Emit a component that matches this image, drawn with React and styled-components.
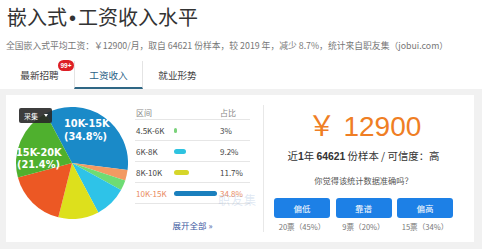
import React from "react";
import styled, { createGlobalStyle } from "styled-components";

const GlobalStyle = createGlobalStyle`
  html, body { margin: 0; padding: 0; background: #fff; }
  body { font-family: "Noto Sans CJK SC", "Noto Sans", sans-serif; color: #333; }
  * { box-sizing: border-box; }
`;

const Page = styled.div`
  width: 482px;
  height: 249px;
  overflow: hidden;
  display: flex;
  flex-direction: column;
`;

const Header = styled.div`
  padding: 3px 7px 0 7px;
`;

const Title = styled.h1`
  margin: 0;
  font-size: 20px;
  line-height: 28px;
  font-weight: 400;
  color: #333;
`;

const Dot = styled.span`
  margin: 0 2px;
  font-family: "Liberation Sans", sans-serif;
`;

const Subtitle = styled.p`
  margin: 8px 0 0 -1px;
  font-size: 8.8px;
  line-height: 12px;
  color: #777;
  white-space: nowrap;
`;

const Tabs = styled.div`
  display: flex;
  margin-top: 9px;
  padding-left: 5px;
  height: 29px;
`;

const Tab = styled.div`
  position: relative;
  width: 69px;
  display: flex;
  align-items: center;
  justify-content: center;
  font-size: 9.6px;
  color: ${(p) => (p.$active ? "#2b5f86" : "#444")};
  border-left: 1px solid ${(p) => (p.$active ? "#e4e4e4" : "transparent")};
  border-right: 1px solid ${(p) => (p.$active ? "#e4e4e4" : "transparent")};
  border-bottom: 2px solid ${(p) => (p.$active ? "#2f6785" : "transparent")};
  padding-top: 2px;
`;

const Badge = styled.span`
  position: absolute;
  left: 52px;
  top: -1px;
  width: 16px;
  height: 11px;
  border-radius: 6px;
  background: #dd1f26;
  color: #fff;
  font-family: "Liberation Sans", sans-serif;
  font-size: 6.5px;
  line-height: 11px;
  text-align: center;
  font-weight: 700;
`;

const Gray = styled.div`
  flex: 1;
  background: #f1f1f1;
  padding: 6px 8px 7px 6px;
`;

const Card = styled.div`
  position: relative;
  background: #fff;
  height: 147px;
  display: flex;
`;

const PieArea = styled.div`
  position: relative;
  padding: 12px 0 0 10px;
  width: 122px;
`;

const Picker = styled.div`
  position: absolute;
  left: 13px;
  top: 13px;
  width: 33px;
  height: 15px;
  background: rgba(40, 40, 40, 0.9);
  border-radius: 2px;
  color: #fff;
  font-size: 7px;
  display: flex;
  align-items: center;
  gap: 6px;
  padding-left: 5px;
`;

const Caret = styled.span`
  width: 0;
  height: 0;
  border-left: 2.5px solid transparent;
  border-right: 2.5px solid transparent;
  border-top: 3px solid #fff;
`;

const TableCol = styled.div`
  width: 115px;
  margin-left: 7px;
  padding-top: 10px;
  display: flex;
  flex-direction: column;
`;

const Row = styled.div`
  display: grid;
  grid-template-columns: 38px 46px 1fr;
  align-items: center;
  height: ${(p) => (p.$head ? "15px" : "21px")};
  border-bottom: 1px solid #e6e6e6;
  font-size: 8px;
  padding-left: 1px;
  padding-top: ${(p) => (p.$head ? "0" : "1px")};
  color: ${(p) => (p.$head ? "#888" : p.$hot ? "#e98a5e" : "#444")};
`;

const Bar = styled.span`
  display: block;
  height: 5px;
  border-radius: 3px;
  background: ${(p) => p.$color};
`;

const Expand = styled.a`
  margin-top: 15px;
  align-self: center;
  font-size: 8.5px;
  line-height: 12px;
  color: #3a58a0;
  text-decoration: none;
`;

const Watermark = styled.span`
  position: absolute;
  left: 212px;
  top: 96px;
  font-size: 12px;
  color: rgba(150, 180, 215, 0.3);
  letter-spacing: 1px;
`;

const Right = styled.div`
  margin: 10px 0 0 13px;
  height: 127px;
  width: 200px;
  border-left: 1px solid #e8e8e8;
  display: flex;
  flex-direction: column;
  align-items: center;
  padding-top: 6px;
`;

const Price = styled.div`
  font-family: "Liberation Sans", "Noto Sans CJK SC", sans-serif;
  font-size: 28px;
  line-height: 32px;
  color: #ef7e24;
  margin-left: 2px;
`;

const Info = styled.div`
  margin-top: 6px;
  font-size: 10.4px;
  line-height: 14px;
  color: #333;
  b { font-weight: 700; font-family: "Liberation Sans", sans-serif; }
`;

const Question = styled.div`
  margin-top: 10px;
  font-size: 8.2px;
  line-height: 12px;
  color: #555;
`;

const Votes = styled.div`
  margin-top: 12px;
  display: grid;
  grid-template-columns: repeat(3, 56px);
  column-gap: 5.5px;
  row-gap: 4px;
  justify-items: center;
`;

const VoteBtn = styled.button`
  width: 56px;
  height: 20px;
  border: none;
  border-radius: 3px;
  background: #1d80e6;
  color: #fff;
  font-family: inherit;
  font-size: 8.5px;
  padding: 0;
`;

const VoteCount = styled.span`
  font-size: 7.6px;
  line-height: 10px;
  color: #777;
  white-space: nowrap;
`;

const slices = [
  { v: 34.8, c: "#1a8ac8" },
  { v: 3, c: "#f29a62" },
  { v: 3, c: "#6edc74" },
  { v: 9.2, c: "#2ec3e8" },
  { v: 11.7, c: "#dde01c" },
  { v: 16.9, c: "#ec5824" },
  { v: 21.4, c: "#4fb02e" },
];

function Pie() {
  const r = 56;
  const cx = 56;
  const cy = 56;
  let a = -28;
  const pt = (deg) => {
    const rad = ((deg - 90) * Math.PI) / 180;
    return [cx + r * Math.cos(rad), cy + r * Math.sin(rad)];
  };
  return (
    <svg width="112" height="112" viewBox="0 0 112 112">
      {slices.map((s, i) => {
        const start = a;
        const end = a + (s.v / 100) * 360;
        a = end;
        const [x1, y1] = pt(start);
        const [x2, y2] = pt(end);
        const large = end - start > 180 ? 1 : 0;
        return (
          <path
            key={i}
            d={`M${cx},${cy} L${x1},${y1} A${r},${r} 0 ${large} 1 ${x2},${y2} Z`}
            fill={s.c}
          />
        );
      })}
      <g fill="#fff" fontFamily="DejaVu Sans, sans-serif" fontWeight="700" fontSize="9.8">
        <text x="48" y="20">10K-15K</text>
        <text x="48" y="33">(34.8%)</text>
        <text x="0" y="49">15K-20K</text>
        <text x="1" y="61">(21.4%)</text>
      </g>
    </svg>
  );
}

const rows = [
  { k: "4.5K-6K", w: 3, c: "#7bd27b", p: "3%" },
  { k: "6K-8K", w: 12, c: "#2ec3e0", p: "9.2%" },
  { k: "8K-10K", w: 15, c: "#d6d62a", p: "11.7%" },
  { k: "10K-15K", w: 43, c: "#1a7fbd", p: "34.8%", hot: true },
];

export default function App() {
  return (
    <Page>
      <GlobalStyle />
      <Header>
        <Title>
          嵌入式<Dot>•</Dot>工资收入水平
        </Title>
        <Subtitle>
          全国嵌入式平均工资：￥12900/月，取自 64621 份样本，较 2019 年，减少 8.7%，统计来自职友集（jobui.com）
        </Subtitle>
      </Header>
      <Tabs>
        <Tab>
          最新招聘
          <Badge>99+</Badge>
        </Tab>
        <Tab $active>工资收入</Tab>
        <Tab>就业形势</Tab>
      </Tabs>
      <Gray>
        <Card>
          <PieArea>
            <Pie />
            <Picker>
              采集 <Caret />
            </Picker>
          </PieArea>
          <TableCol>
            <Row $head>
              <span>区间</span>
              <span />
              <span>占比</span>
            </Row>
            {rows.map((r) => (
              <Row key={r.k} $hot={r.hot}>
                <span>{r.k}</span>
                <span>
                  <Bar $color={r.c} style={{ width: r.w }} />
                </span>
                <span>{r.p}</span>
              </Row>
            ))}
            <Expand href="#">展开全部 »</Expand>
          </TableCol>
          <Watermark>职友集</Watermark>
          <Right>
            <Price>￥ 12900</Price>
            <Info>
              近<b>1</b>年 <b>64621</b> 份样本 / 可信度：高
            </Info>
            <Question>你觉得该统计数据准确吗？</Question>
            <Votes>
              <VoteBtn>偏低</VoteBtn>
              <VoteBtn>靠谱</VoteBtn>
              <VoteBtn>偏高</VoteBtn>
              <VoteCount>20票（45%）</VoteCount>
              <VoteCount>9票（20%）</VoteCount>
              <VoteCount>15票（34%）</VoteCount>
            </Votes>
          </Right>
        </Card>
      </Gray>
    </Page>
  );
}
